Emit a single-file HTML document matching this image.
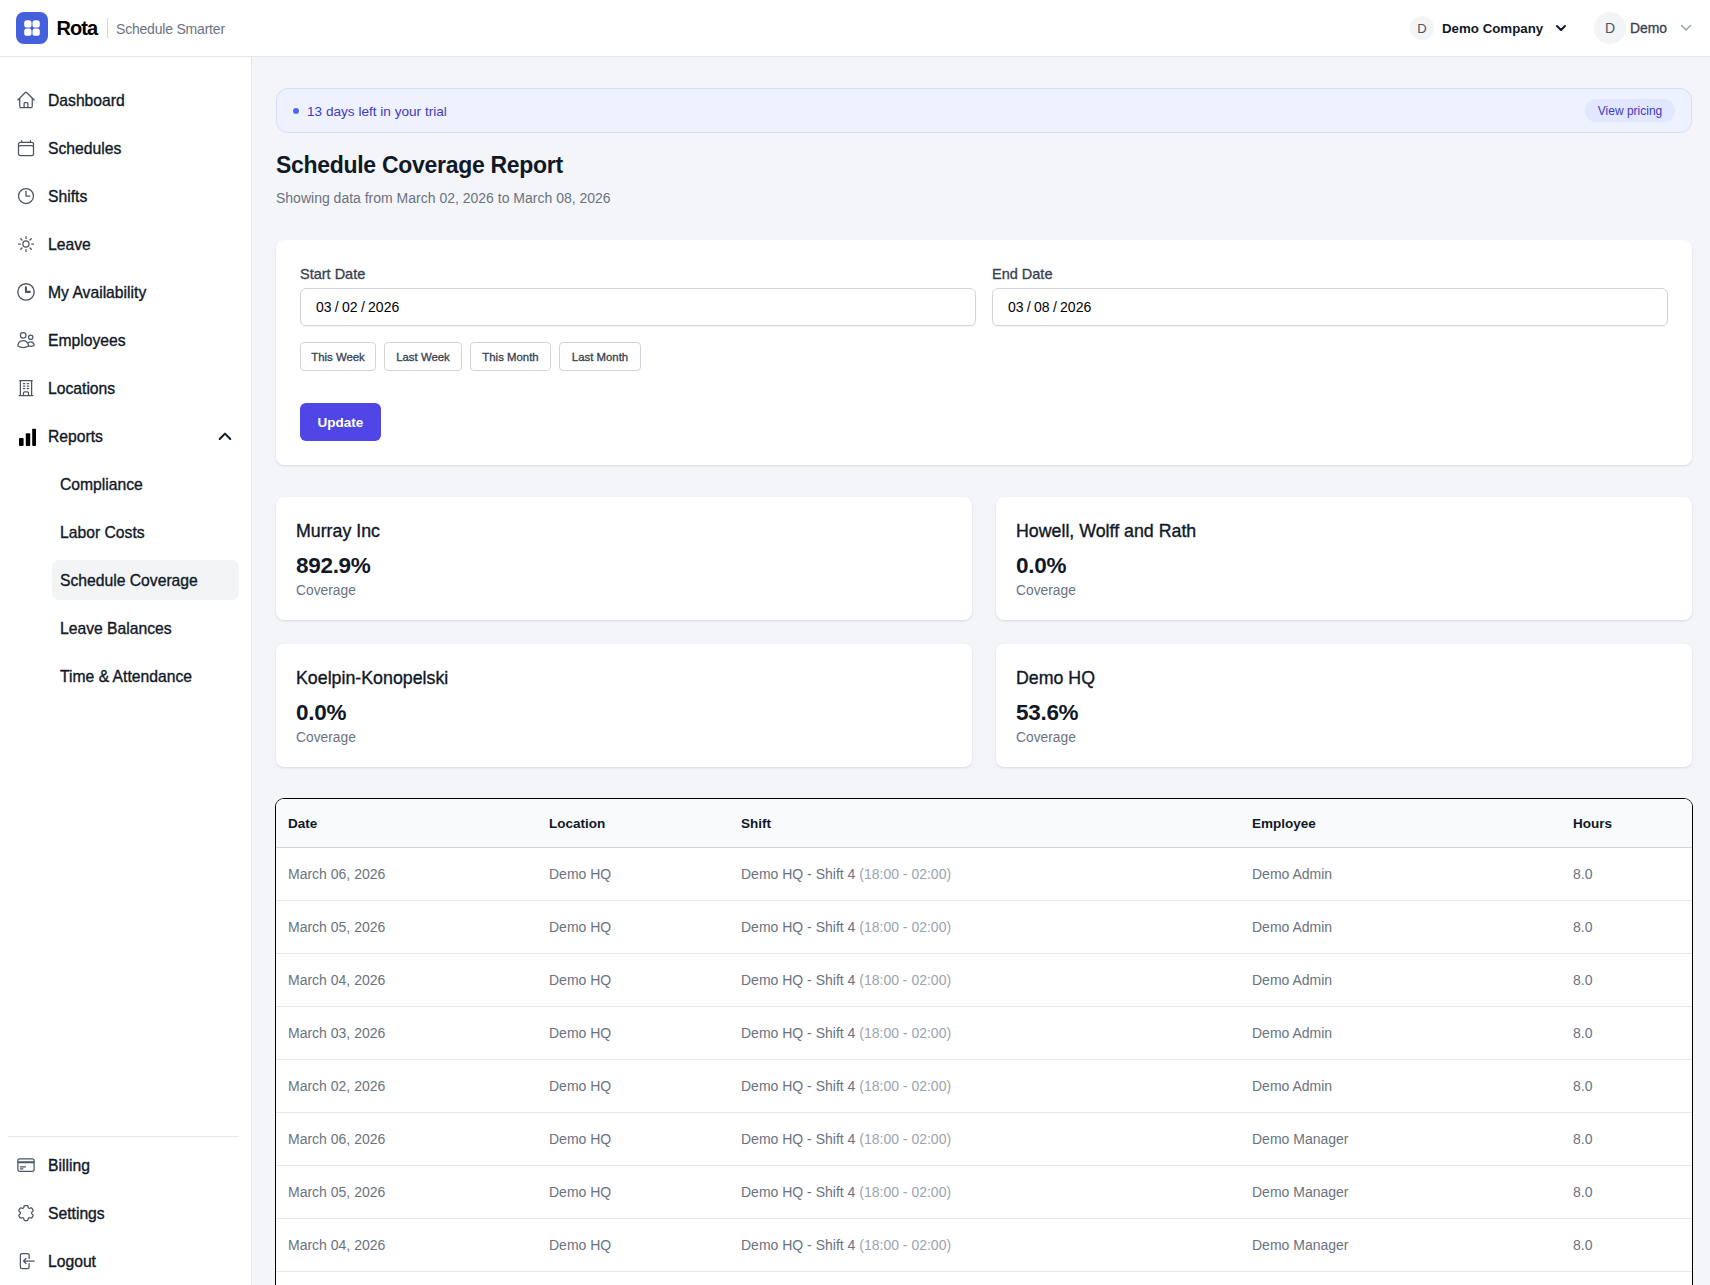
<!DOCTYPE html>
<html><head><meta charset="utf-8">
<style>
*{margin:0;padding:0;box-sizing:border-box}
html,body{width:1710px;height:1285px;overflow:hidden;background:#f4f5f9;font-family:"Liberation Sans",sans-serif;color:#111827}
.a{position:absolute}
.t{position:absolute;white-space:nowrap;line-height:1}
#hdr{left:0;top:0;width:1710px;height:57px;background:#fff;border-bottom:1px solid #e5e7eb}
#side{left:0;top:57px;width:252px;height:1228px;background:#fff;border-right:1px solid #e5e7eb}
.ic{position:absolute;left:16px;width:20px;height:20px;fill:none;stroke:#4b5563;stroke-width:1.5;stroke-linecap:round;stroke-linejoin:round}
.nav{font-size:15.7px;color:#111827;left:48px;-webkit-text-stroke:0.35px #111827}
.sub{font-size:15.7px;color:#111827;left:60px;-webkit-text-stroke:0.35px #111827}
.card{position:absolute;background:#fff;border-radius:8px;box-shadow:0 1px 3px rgba(0,0,0,.08),0 1px 2px rgba(0,0,0,.04)}
.inp{position:absolute;top:288px;height:38px;border:1px solid #d1d5db;border-radius:6px;background:#fff;box-shadow:0 1px 2px rgba(0,0,0,.05)}
.qb{position:absolute;top:342px;height:29px;border:1px solid #d1d5db;border-radius:4px;background:#fff}
.qbt{font-size:11.4px;color:#374151;-webkit-text-stroke:0.3px #374151;top:351.7px}
.cn{font-size:17.8px;color:#111827;-webkit-text-stroke:0.35px #111827}
.pc{font-size:22.5px;letter-spacing:-0.3px;font-weight:bold;color:#111827}
.cv{font-size:13.8px;color:#6b7280}
.th{font-size:13.5px;font-weight:bold;color:#111827;top:816.7px}
.td{font-size:14px;color:#6b7280}
.rl{position:absolute;left:276px;width:1416px;height:1px;background:#e5e7eb}
</style></head><body>

<!-- header -->
<div id="hdr" class="a"></div>
<div class="a" style="left:16px;top:12px;width:32px;height:32px;border-radius:8px;background:#4460dc"></div>
<svg class="a" style="left:16px;top:12px" width="32" height="32" viewBox="0 0 32 32"><g fill="#fff"><rect x="8.2" y="8.2" width="7.3" height="7.3" rx="2.6"/><rect x="16.5" y="8.2" width="7.3" height="7.3" rx="2.6"/><rect x="8.2" y="16.5" width="7.3" height="7.3" rx="2.6"/><rect x="16.5" y="16.5" width="7.3" height="7.3" rx="2.6"/></g></svg>
<div class="t" style="left:56.5px;top:18px;font-size:20px;letter-spacing:-0.9px;font-weight:bold;color:#000">Rota</div>
<div class="a" style="left:107px;top:18px;width:1px;height:20px;background:#d1d5db"></div>
<div class="t" style="left:116px;top:21.6px;font-size:14px;letter-spacing:-0.2px;color:#6b7280">Schedule Smarter</div>

<div class="a" style="left:1410px;top:16px;width:24px;height:24px;border-radius:50%;background:#f3f4f6"></div>
<div class="t" style="left:1410px;width:24px;text-align:center;top:22px;font-size:13px;color:#4b5563">D</div>
<div class="t" style="left:1442px;top:21.8px;font-size:13.3px;font-weight:bold;color:#111827">Demo Company</div>
<svg class="a" style="left:1555px;top:22px" width="12" height="12" viewBox="0 0 12 12"><polyline points="2,4 6,8 10,4" fill="none" stroke="#111827" stroke-width="2" stroke-linecap="round" stroke-linejoin="round"/></svg>

<div class="a" style="left:1594px;top:12px;width:32px;height:32px;border-radius:50%;background:#f3f4f6"></div>
<div class="t" style="left:1594px;width:32px;text-align:center;top:20.5px;font-size:14px;color:#4b5563">D</div>
<div class="t" style="left:1630px;top:22.2px;font-size:13.9px;color:#374151;-webkit-text-stroke:0.3px #374151">Demo</div>
<svg class="a" style="left:1680px;top:22px" width="12" height="12" viewBox="0 0 12 12"><polyline points="1.5,3.5 6,8 10.5,3.5" fill="none" stroke="#9ca3af" stroke-width="1.5" stroke-linecap="round" stroke-linejoin="round"/></svg>

<!-- sidebar -->
<div id="side" class="a"></div>
<svg class="ic" style="top:90px" viewBox="0 0 24 24"><path d="m2.25 12 8.954-8.955c.44-.439 1.152-.439 1.591 0L21.75 12M4.5 9.75v10.125c0 .621.504 1.125 1.125 1.125H9.75v-4.875c0-.621.504-1.125 1.125-1.125h2.25c.621 0 1.125.504 1.125 1.125V21h4.125c.621 0 1.125-.504 1.125-1.125V9.75M8.25 21h8.25"/></svg>
<div class="t nav" style="top:93.3px">Dashboard</div>
<svg class="ic" style="top:138px" viewBox="0 0 24 24"><path d="M6.75 3v2.25M17.25 3v2.25M3 18.75V7.5a2.25 2.25 0 0 1 2.25-2.25h13.5A2.25 2.25 0 0 1 21 7.5v11.25m-18 0A2.25 2.25 0 0 0 5.25 21h13.5A2.25 2.25 0 0 0 21 18.75m-18 0v-7.5A2.25 2.25 0 0 1 5.25 9h13.5A2.25 2.25 0 0 1 21 11.25v7.5"/></svg>
<div class="t nav" style="top:141.3px">Schedules</div>
<svg class="ic" style="top:186px" viewBox="0 0 24 24"><path d="M12 6v6h4.5m4.5 0a9 9 0 1 1-18 0 9 9 0 0 1 18 0Z"/></svg>
<div class="t nav" style="top:189.3px">Shifts</div>
<svg class="ic" style="top:234px" viewBox="0 0 24 24"><path d="M12 3v2.25m6.364.386-1.591 1.591M21 12h-2.25m-.386 6.364-1.591-1.591M12 18.75V21m-4.773-4.227-1.591 1.591M5.25 12H3m4.227-4.773L5.636 5.636M15.75 12a3.75 3.75 0 1 1-7.5 0 3.75 3.75 0 0 1 7.5 0Z"/></svg>
<div class="t nav" style="top:237.3px">Leave</div>
<svg class="a" style="left:12px;top:278px" width="28" height="28" viewBox="0 0 28 28"><circle cx="14" cy="13.9" r="8.2" fill="none" stroke="#4b5563" stroke-width="1.35"/><path d="M13.95 9.2V13.9H17.8" fill="none" stroke="#4b5563" stroke-width="2.1" stroke-linecap="round" stroke-linejoin="round"/></svg>
<div class="t nav" style="top:285.3px">My Availability</div>
<svg class="ic" style="top:330px" viewBox="0 0 24 24"><path d="M15 19.128a9.38 9.38 0 0 0 2.625.372 9.337 9.337 0 0 0 4.121-.952 4.125 4.125 0 0 0-7.533-2.493M15 19.128v-.003c0-1.113-.285-2.16-.786-3.07M15 19.128v.106A12.318 12.318 0 0 1 8.624 21c-2.331 0-4.512-.645-6.374-1.766l-.001-.109a6.375 6.375 0 0 1 11.964-3.07M12 6.375a3.375 3.375 0 1 1-6.75 0 3.375 3.375 0 0 1 6.75 0Zm8.25 2.25a2.625 2.625 0 1 1-5.25 0 2.625 2.625 0 0 1 5.25 0Z"/></svg>
<div class="t nav" style="top:333.3px">Employees</div>
<svg class="ic" style="top:378px" viewBox="0 0 24 24"><path d="M3.75 21h16.5M4.5 3h15M5.25 3v18m13.5-18v18M9 6.75h1.5m-1.5 3h1.5m-1.5 3h1.5m3-6H15m-1.5 3H15m-1.5 3H15M9 21v-3.375c0-.621.504-1.125 1.125-1.125h3.75c.621 0 1.125.504 1.125 1.125V21"/></svg>
<div class="t nav" style="top:381.3px">Locations</div>
<svg class="a" style="left:16px;top:426px" width="20" height="20" viewBox="0 0 20 20"><g fill="#000"><rect x="3" y="11.9" width="4.6" height="8" rx="1"/><rect x="9.8" y="7.2" width="4.4" height="12.7" rx="1"/><rect x="16.2" y="2.8" width="3.8" height="17.1" rx="0.8"/></g></svg>
<div class="t nav" style="top:429.3px">Reports</div>
<svg class="a" style="left:217px;top:430px" width="16" height="12" viewBox="0 0 16 12"><polyline points="2.7,9 8,3.6 13.3,9" fill="none" stroke="#111827" stroke-width="2" stroke-linecap="round" stroke-linejoin="round"/></svg>

<div class="t sub" style="top:477.3px">Compliance</div>
<div class="t sub" style="top:525.3px">Labor Costs</div>
<div class="a" style="left:52px;top:560px;width:187px;height:40px;border-radius:7px;background:#f3f4f6"></div>
<div class="t sub" style="top:573.3px">Schedule Coverage</div>
<div class="t sub" style="top:621.3px">Leave Balances</div>
<div class="t sub" style="top:669.3px">Time &amp; Attendance</div>

<div class="a" style="left:8px;top:1136px;width:231px;height:1px;background:#e5e7eb"></div>
<svg class="ic" style="top:1155px" viewBox="0 0 24 24"><path d="M2.25 8.25h19.5M2.25 9h19.5m-16.5 5.25h6m-6 2.25h3m-3.75 3h15a2.25 2.25 0 0 0 2.25-2.25V6.75A2.25 2.25 0 0 0 19.5 4.5h-15a2.25 2.25 0 0 0-2.25 2.25v10.5A2.25 2.25 0 0 0 4.5 19.5Z"/></svg>
<div class="t nav" style="top:1158.3px">Billing</div>
<svg class="ic" style="top:1203px" viewBox="0 0 24 24"><path d="M9.594 3.94c.09-.542.56-.94 1.11-.94h2.593c.55 0 1.02.398 1.11.94l.213 1.281c.063.374.313.686.645.87.074.04.147.083.22.127.325.196.72.257 1.075.124l1.217-.456a1.125 1.125 0 0 1 1.37.49l1.296 2.247a1.125 1.125 0 0 1-.26 1.431l-1.003.827c-.293.241-.438.613-.43.992a7.723 7.723 0 0 1 0 .255c-.008.378.137.75.43.991l1.004.827c.424.35.534.955.26 1.43l-1.298 2.247a1.125 1.125 0 0 1-1.369.491l-1.217-.456c-.355-.133-.75-.072-1.076.124a6.47 6.47 0 0 1-.22.128c-.331.183-.581.495-.644.869l-.213 1.281c-.09.543-.56.94-1.11.94h-2.594c-.55 0-1.019-.398-1.11-.94l-.213-1.281c-.062-.374-.312-.686-.644-.87a6.52 6.52 0 0 1-.22-.127c-.325-.196-.72-.257-1.076-.124l-1.217.456a1.125 1.125 0 0 1-1.369-.49l-1.297-2.247a1.125 1.125 0 0 1 .26-1.431l1.004-.827c.292-.24.437-.613.43-.991a6.932 6.932 0 0 1 0-.255c.007-.38-.138-.751-.43-.992l-1.004-.827a1.125 1.125 0 0 1-.26-1.43l1.297-2.247a1.125 1.125 0 0 1 1.37-.491l1.216.456c.356.133.751.072 1.076-.124.072-.044.146-.086.22-.128.332-.183.582-.495.644-.869l.214-1.28Z"/></svg>
<div class="t nav" style="top:1206.3px">Settings</div>
<svg class="ic" style="top:1251px" viewBox="0 0 24 24"><path d="M15.75 9V5.25A2.25 2.25 0 0 0 13.5 3h-6a2.25 2.25 0 0 0-2.25 2.25v13.5A2.25 2.25 0 0 0 7.5 21h6a2.25 2.25 0 0 0 2.25-2.25V15M12 9l-3 3m0 0 3 3m-3-3h12.75"/></svg>
<div class="t nav" style="top:1254.3px">Logout</div>

<!-- banner -->
<div class="a" style="left:276px;top:88px;width:1416px;height:45px;border-radius:12px;background:#eef2ff;border:1px solid #d5ddfc"></div>
<div class="a" style="left:293px;top:108px;width:6px;height:6px;border-radius:50%;background:#4f6af0"></div>
<div class="t" style="left:307px;top:104.7px;font-size:13.6px;color:#4338ca">13 days left in your trial</div>
<div class="a" style="left:1585px;top:99px;width:90px;height:23px;border-radius:12px;background:#e0e7ff"></div>
<div class="t" style="left:1585px;width:90px;text-align:center;top:105.2px;font-size:12px;color:#4338ca">View pricing</div>

<div class="t" style="left:276px;top:153.8px;font-size:23px;letter-spacing:-0.3px;font-weight:bold;color:#111827">Schedule Coverage Report</div>
<div class="t" style="left:276px;top:191.3px;font-size:14px;color:#6b7280">Showing data from March 02, 2026 to March 08, 2026</div>

<!-- filter card -->
<div class="card" style="left:276px;top:240px;width:1416px;height:225px"></div>
<div class="t" style="left:300px;top:266.8px;font-size:14.5px;color:#374151;-webkit-text-stroke:0.3px #374151">Start Date</div>
<div class="t" style="left:992px;top:266.8px;font-size:14.5px;color:#374151;-webkit-text-stroke:0.3px #374151">End Date</div>
<div class="inp" style="left:300px;width:676px"></div>
<div class="inp" style="left:992px;width:676px"></div>
<div class="t" style="left:316px;top:300px;font-size:14px;word-spacing:-0.6px;color:#000">03 / 02 / 2026</div>
<div class="t" style="left:1008px;top:300px;font-size:14px;word-spacing:-0.6px;color:#000">03 / 08 / 2026</div>

<div class="qb" style="left:300px;width:76px"></div><div class="t qbt" style="left:300px;width:76px;text-align:center">This Week</div>
<div class="qb" style="left:384px;width:78px"></div><div class="t qbt" style="left:384px;width:78px;text-align:center">Last Week</div>
<div class="qb" style="left:470px;width:81px"></div><div class="t qbt" style="left:470px;width:81px;text-align:center">This Month</div>
<div class="qb" style="left:559px;width:82px"></div><div class="t qbt" style="left:559px;width:82px;text-align:center">Last Month</div>

<div class="a" style="left:300px;top:403px;width:81px;height:38px;border-radius:6px;background:#4f46e5"></div>
<div class="t" style="left:300px;width:81px;text-align:center;top:416px;font-size:13.5px;font-weight:bold;color:#fff">Update</div>

<!-- stat cards -->
<div class="card" style="left:276px;top:497px;width:696px;height:123px"></div>
<div class="t cn" style="left:296px;top:522.8px">Murray Inc</div>
<div class="t pc" style="left:296px;top:554.8px">892.9%</div>
<div class="t cv" style="left:296px;top:584.2px">Coverage</div>

<div class="card" style="left:996px;top:497px;width:696px;height:123px"></div>
<div class="t cn" style="left:1016px;top:522.8px">Howell, Wolff and Rath</div>
<div class="t pc" style="left:1016px;top:554.8px">0.0%</div>
<div class="t cv" style="left:1016px;top:584.2px">Coverage</div>

<div class="card" style="left:276px;top:644px;width:696px;height:123px"></div>
<div class="t cn" style="left:296px;top:669.8px">Koelpin-Konopelski</div>
<div class="t pc" style="left:296px;top:701.8px">0.0%</div>
<div class="t cv" style="left:296px;top:731.2px">Coverage</div>

<div class="card" style="left:996px;top:644px;width:696px;height:123px"></div>
<div class="t cn" style="left:1016px;top:669.8px">Demo HQ</div>
<div class="t pc" style="left:1016px;top:701.8px">53.6%</div>
<div class="t cv" style="left:1016px;top:731.2px">Coverage</div>

<!-- table -->
<div id="tbl" class="a" style="left:276px;top:799px;width:1416px;height:520px;border-radius:8px;background:#fff;overflow:hidden;box-shadow:0 0 0 1px #000">
  <div class="a" style="left:0;top:0;width:1416px;height:49px;background:#f9fafb;border-bottom:1px solid #d1d5db"></div>
</div>
<div class="t th" style="left:288px">Date</div>
<div class="t th" style="left:549px">Location</div>
<div class="t th" style="left:741px">Shift</div>
<div class="t th" style="left:1252px">Employee</div>
<div class="t th" style="left:1573px">Hours</div>
<div class="t td" style="left:288px;top:866.8px">March 06, 2026</div><div class="t td" style="left:549px;top:866.8px">Demo HQ</div><div class="t td" style="left:741px;top:866.8px">Demo HQ - Shift 4 <span style="color:#9ca3af">(18:00 - 02:00)</span></div><div class="t td" style="left:1252px;top:866.8px">Demo Admin</div><div class="t td" style="left:1573px;top:866.8px">8.0</div>
<div class="rl" style="top:900px"></div>
<div class="t td" style="left:288px;top:919.8px">March 05, 2026</div><div class="t td" style="left:549px;top:919.8px">Demo HQ</div><div class="t td" style="left:741px;top:919.8px">Demo HQ - Shift 4 <span style="color:#9ca3af">(18:00 - 02:00)</span></div><div class="t td" style="left:1252px;top:919.8px">Demo Admin</div><div class="t td" style="left:1573px;top:919.8px">8.0</div>
<div class="rl" style="top:953px"></div>
<div class="t td" style="left:288px;top:972.8px">March 04, 2026</div><div class="t td" style="left:549px;top:972.8px">Demo HQ</div><div class="t td" style="left:741px;top:972.8px">Demo HQ - Shift 4 <span style="color:#9ca3af">(18:00 - 02:00)</span></div><div class="t td" style="left:1252px;top:972.8px">Demo Admin</div><div class="t td" style="left:1573px;top:972.8px">8.0</div>
<div class="rl" style="top:1006px"></div>
<div class="t td" style="left:288px;top:1025.8px">March 03, 2026</div><div class="t td" style="left:549px;top:1025.8px">Demo HQ</div><div class="t td" style="left:741px;top:1025.8px">Demo HQ - Shift 4 <span style="color:#9ca3af">(18:00 - 02:00)</span></div><div class="t td" style="left:1252px;top:1025.8px">Demo Admin</div><div class="t td" style="left:1573px;top:1025.8px">8.0</div>
<div class="rl" style="top:1059px"></div>
<div class="t td" style="left:288px;top:1078.8px">March 02, 2026</div><div class="t td" style="left:549px;top:1078.8px">Demo HQ</div><div class="t td" style="left:741px;top:1078.8px">Demo HQ - Shift 4 <span style="color:#9ca3af">(18:00 - 02:00)</span></div><div class="t td" style="left:1252px;top:1078.8px">Demo Admin</div><div class="t td" style="left:1573px;top:1078.8px">8.0</div>
<div class="rl" style="top:1112px"></div>
<div class="t td" style="left:288px;top:1131.8px">March 06, 2026</div><div class="t td" style="left:549px;top:1131.8px">Demo HQ</div><div class="t td" style="left:741px;top:1131.8px">Demo HQ - Shift 4 <span style="color:#9ca3af">(18:00 - 02:00)</span></div><div class="t td" style="left:1252px;top:1131.8px">Demo Manager</div><div class="t td" style="left:1573px;top:1131.8px">8.0</div>
<div class="rl" style="top:1165px"></div>
<div class="t td" style="left:288px;top:1184.8px">March 05, 2026</div><div class="t td" style="left:549px;top:1184.8px">Demo HQ</div><div class="t td" style="left:741px;top:1184.8px">Demo HQ - Shift 4 <span style="color:#9ca3af">(18:00 - 02:00)</span></div><div class="t td" style="left:1252px;top:1184.8px">Demo Manager</div><div class="t td" style="left:1573px;top:1184.8px">8.0</div>
<div class="rl" style="top:1218px"></div>
<div class="t td" style="left:288px;top:1237.8px">March 04, 2026</div><div class="t td" style="left:549px;top:1237.8px">Demo HQ</div><div class="t td" style="left:741px;top:1237.8px">Demo HQ - Shift 4 <span style="color:#9ca3af">(18:00 - 02:00)</span></div><div class="t td" style="left:1252px;top:1237.8px">Demo Manager</div><div class="t td" style="left:1573px;top:1237.8px">8.0</div>
<div class="rl" style="top:1271px"></div>
<div class="t td" style="left:288px;top:1290.8px">March 03, 2026</div><div class="t td" style="left:549px;top:1290.8px">Demo HQ</div><div class="t td" style="left:741px;top:1290.8px">Demo HQ - Shift 4 <span style="color:#9ca3af">(18:00 - 02:00)</span></div><div class="t td" style="left:1252px;top:1290.8px">Demo Manager</div><div class="t td" style="left:1573px;top:1290.8px">8.0</div>
</body></html>
